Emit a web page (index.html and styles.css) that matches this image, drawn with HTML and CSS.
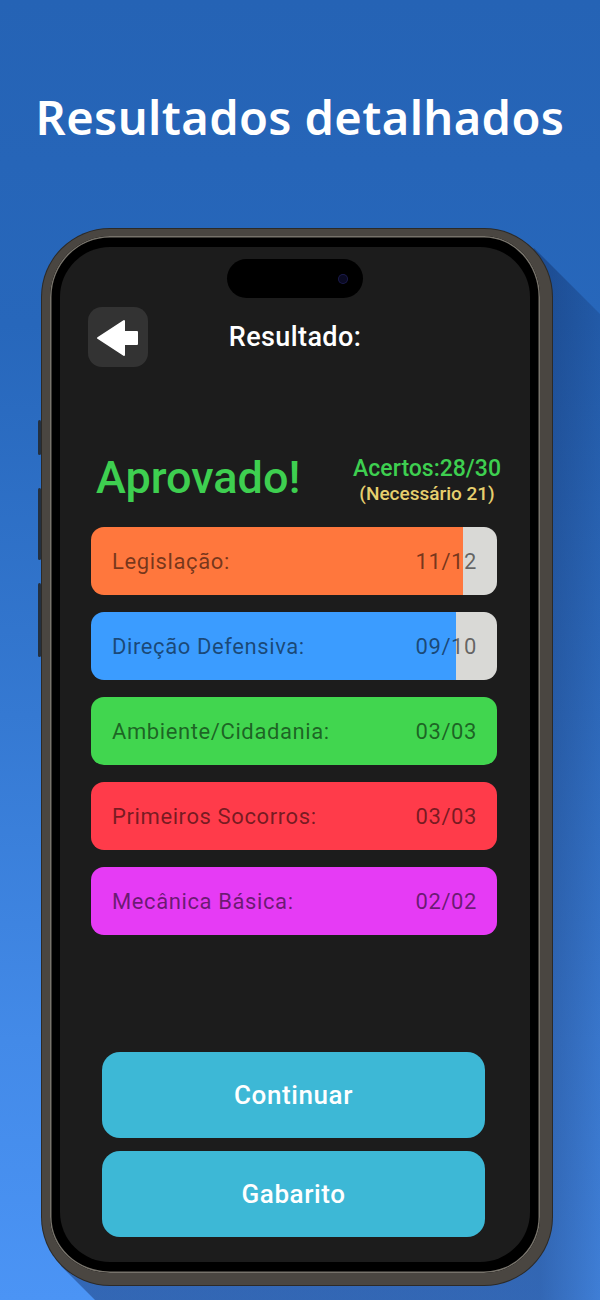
FILE: index.html
```html
<!DOCTYPE html>
<html lang="pt-BR">
<head>
    <meta charset="UTF-8">
    <meta name="viewport" content="width=device-width, initial-scale=1.0">
    <title>Resultados detalhados</title>
    <link rel="stylesheet" href="styles.css">
</head>
<body>
    <!-- sombra longa atras do celular -->
    <svg class="long-shadow" width="600" height="1300" viewBox="0 0 600 1300">
        <defs>
            <linearGradient id="shadowFade" gradientUnits="userSpaceOnUse" x1="540" y1="0" x2="610" y2="0">
                <stop offset="0" stop-color="#0e2454" stop-opacity="0.4"/>
                <stop offset="1" stop-color="#0e2454" stop-opacity="0.16"/>
            </linearGradient>
        </defs>
        <polygon points="534,248 1534,1248 1061,2266 61,1266" fill="url(#shadowFade)"/>
    </svg>

    <h1 class="headline">Resultados detalhados</h1>

    <div class="phone">
        <span class="side-btn mute"></span>
        <span class="side-btn vol-up"></span>
        <span class="side-btn vol-down"></span>

        <div class="screen">
            <div class="island"><span class="camera"></span></div>

            <div class="topbar">
                <button class="back-btn" aria-label="Voltar">
                    <svg width="60" height="60" viewBox="0 0 60 60">
                        <polygon points="10,31 36,14 36,25 49,25 49,37 36,37 36,48" fill="#fff" stroke="#fff" stroke-width="2" stroke-linejoin="round"/>
                    </svg>
                </button>
                <h2>Resultado:</h2>
                <span></span>
            </div>

            <div class="summary">
                <div class="status">Aprovado!</div>
                <div class="score">
                    <div class="score-hits">Acertos:28/30</div>
                    <div class="score-min">(Necessário 21)</div>
                </div>
            </div>

            <div class="subjects">
                <div class="subject orange" style="--fill: 91.67%">
                    <span>Legislação:</span><span>11/12</span>
                </div>
                <div class="subject blue" style="--fill: 90%">
                    <span>Direção Defensiva:</span><span>09/10</span>
                </div>
                <div class="subject green" style="--fill: 100%">
                    <span>Ambiente/Cidadania:</span><span>03/03</span>
                </div>
                <div class="subject red" style="--fill: 100%">
                    <span>Primeiros Socorros:</span><span>03/03</span>
                </div>
                <div class="subject purple" style="--fill: 100%">
                    <span>Mecânica Básica:</span><span>02/02</span>
                </div>
            </div>

            <div class="actions">
                <button class="action">Continuar</button>
                <button class="action">Gabarito</button>
            </div>
        </div>
    </div>
</body>
</html>
```

FILE: styles.css
```css
body {
    margin: 0;
    width: 600px;
    height: 1300px;
    overflow: hidden;
    position: relative;
    font-family: 'Roboto', 'Liberation Sans', sans-serif;
    background: linear-gradient(180deg, #2563b5 0%, #2767bb 25%, #3579d2 55%, #438ae8 80%, #4b94f5 100%);
}
.long-shadow {
    position: absolute;
    top: 0;
    left: 0;
}
.headline {
    position: relative;
    margin: 0;
    padding-top: 88px;
    font-family: 'Noto Sans', 'Open Sans', sans-serif;
    font-size: 47px;
    line-height: 58px;
    font-weight: 600;
    letter-spacing: 0.4px;
    color: #fff;
    text-align: center;
}

/* celular */
.phone {
    position: relative;
    margin: 83px 0 0 42px;
    width: 470px;
    height: 1015px;
    border-style: solid;
    border-color: #4a4641;
    border-width: 7px 12px 12px 8px;
    border-radius: 68px;
    padding: 11px 10px;
    background: #000;
    box-shadow: inset 0 0 0 1.5px #77736b, 0 0 0 1px #2c2a27;
}
.side-btn {
    position: absolute;
    left: -12px;
    width: 3px;
    background: #233040;
    border-radius: 2px;
}
.side-btn.mute { top: 184px; height: 35px; }
.side-btn.vol-up { top: 252px; height: 72px; }
.side-btn.vol-down { top: 347px; height: 74px; }

.screen {
    height: 1015px;
    background: #1c1c1c;
    border-radius: 50px;
    display: flex;
    flex-direction: column;
    overflow: hidden;
}
.island {
    position: relative;
    margin: 12px auto 0;
    width: 136px;
    height: 39px;
    border-radius: 20px;
    background: #000;
}
.camera {
    position: absolute;
    left: 112px;
    top: 16px;
    width: 8px;
    height: 8px;
    border-radius: 50%;
    background: #0a0a22;
    box-shadow: 0 0 0 1px #1b1b4d;
}

.topbar {
    margin-top: 9px;
    padding: 0 28px;
    display: grid;
    grid-template-columns: 60px 1fr 60px;
    align-items: center;
}
.back-btn {
    width: 60px;
    height: 60px;
    padding: 0;
    border: none;
    border-radius: 14px;
    background: #333;
    display: flex;
}
.topbar h2 {
    margin: 0;
    text-align: center;
    color: #fff;
    font-size: 27px;
    font-weight: 500;
    letter-spacing: 0.4px;
}

.summary {
    margin-top: 84px;
    padding: 0 29px 0 36px;
    display: flex;
    justify-content: space-between;
    align-items: flex-start;
}
.status {
    color: #3ecf50;
    font-size: 45px;
    line-height: 54px;
    font-weight: 500;
}
.score {
    margin-top: 5px;
    text-align: center;
    font-weight: 500;
}
.score-hits {
    color: #3ecf50;
    font-size: 23px;
    line-height: 26px;
}
.score-min {
    color: #e6cf6e;
    font-size: 19px;
    line-height: 23px;
}

.subjects {
    margin-top: 22px;
    padding: 0 33px 0 31px;
    display: flex;
    flex-direction: column;
    gap: 17px;
}
.subject {
    height: 68px;
    padding: 0 20px 0 21px;
    border-radius: 13px;
    display: flex;
    justify-content: space-between;
    align-items: center;
    font-size: 22px;
    letter-spacing: 0.6px;
    color: rgba(0, 0, 0, 0.55);
    background: linear-gradient(to right, var(--bar) var(--fill), #d9d9d6 var(--fill));
}
.subject.orange { --bar: #ff773d; }
.subject.blue { --bar: #3b9cff; }
.subject.green { --bar: #41d64f; }
.subject.red { --bar: #ff3b4a; }
.subject.purple { --bar: #e63bf5; }

.actions {
    margin-top: auto;
    padding: 0 45px 25px 42px;
    display: flex;
    flex-direction: column;
    gap: 13px;
}
.action {
    height: 86px;
    border: none;
    border-radius: 18px;
    background: #3db8d6;
    color: #fff;
    font-family: 'Roboto', 'Liberation Sans', sans-serif;
    font-size: 26px;
    font-weight: 500;
    letter-spacing: 0.6px;
}
```
